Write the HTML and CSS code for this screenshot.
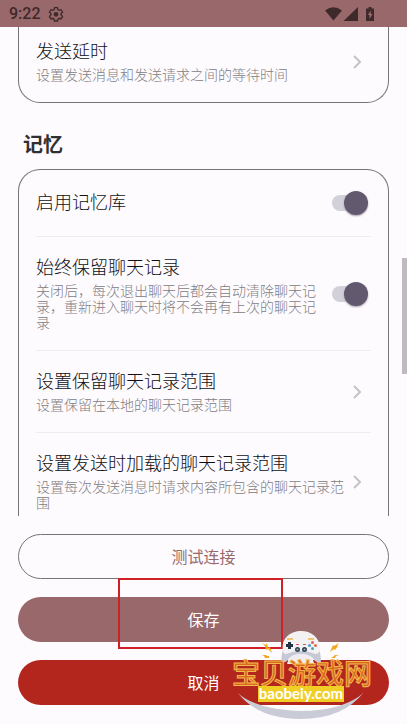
FILE: index.html
```html
<!DOCTYPE html>
<html lang="zh-CN">
<head>
<meta charset="utf-8">
<meta name="viewport" content="width=device-width, initial-scale=1">
<title>设置</title>
<link rel="stylesheet" href="styles.css">
</head>
<body>
<header class="status">
  <span class="clock">9:22</span>
  <svg class="gear" viewBox="0 0 24 24" aria-hidden="true"><path d="M9.8 2.500h4.400l.6 2.900 2 1.100 2.800-.9 2.200 3.800-2.200 2v2.200l2.200 2-2.200 3.800-2.800-.9-2 1.100-.6 2.900H9.800l-.6-2.900-2-1.100-2.800.9-2.200-3.800 2.200-2v-2.200l-2.200-2 2.200-3.800 2.800.9 2-1.100z"/><circle cx="12" cy="12.500" r="3.500"/></svg>
  <svg class="signals" viewBox="0 0 51 16" aria-hidden="true"><path d="M0 4.500Q8.500-2 17 4.500L8.500 14.500z"/><path d="M33 1v14H18.500z"/><path d="M43.500 1h3v1.500H49V15h-8V2.500h2.500z"/><path class="spark" d="M45.800 4.500 42.800 9h1.700v4l3-5h-1.700z"/></svg>
</header>

<main class="content">
  <section class="card card-first">
    <a class="row" href="#delay">
      <span class="text"><span class="title">发送延时</span><span class="desc">设置发送消息和发送请求之间的等待时间</span></span>
      <svg class="chevron" viewBox="0 0 8 14" aria-hidden="true"><path d="M1 1l6 6-6 6"/></svg>
    </a>
  </section>

  <h2 class="heading">记忆</h2>

  <section class="card card-last">
    <label class="row">
      <span class="text"><span class="title">启用记忆库</span></span>
      <input class="switch" type="checkbox" role="switch" checked>
    </label>
    <label class="row">
      <span class="text"><span class="title">始终保留聊天记录</span><span class="desc">关闭后，每次退出聊天后都会自动清除聊天记录，重新进入聊天时将不会再有上次的聊天记录</span></span>
      <input class="switch" type="checkbox" role="switch" checked>
    </label>
    <a class="row" href="#keep-range">
      <span class="text"><span class="title">设置保留聊天记录范围</span><span class="desc">设置保留在本地的聊天记录范围</span></span>
      <svg class="chevron" viewBox="0 0 8 14" aria-hidden="true"><path d="M1 1l6 6-6 6"/></svg>
    </a>
    <a class="row" href="#load-range">
      <span class="text"><span class="title">设置发送时加载的聊天记录范围</span><span class="desc">设置每次发送消息时请求内容所包含的聊天记录范围</span></span>
      <svg class="chevron" viewBox="0 0 8 14" aria-hidden="true"><path d="M1 1l6 6-6 6"/></svg>
    </a>
  </section>
</main>
<div class="scroll-thumb"></div>

<footer class="actions">
  <button class="btn btn-outline" type="button">测试连接</button>
  <button class="btn btn-primary" type="button">保存</button>
  <button class="btn btn-danger" type="button">取消</button>
  <div class="marker"></div>
  <svg class="brand" viewBox="232 628 142 94" role="img" aria-label="宝贝游戏网 baobeiy.com">
    <path fill="#c9cbd7" d="M238 693C258 714 336 720 364 692Q343 719 301 719Q258 719 238 693z"/>
    <path fill="#c7c9d6" d="M284 645Q281 655 281 664L287 661Q291 654 301 654Q311 654 315 661L321 664Q321 653 318 645z"/>
    <path fill="#f3f1f2" d="M283 650C281 638 291 631 301 631S319 637 320 647Q321 654 315 654Q309 651 301 651T286 654Q283 654 283 650z"/>
    <path fill="#efedf0" d="M287 664Q289 654 301 654T314 664z"/>
    <path fill="none" stroke="#edb44c" stroke-width="1.500" d="M287 639h6m15 0h6"/>
    <path fill="none" stroke="#203543" stroke-width="3" d="M289.500 642v7m-3.500-3.500h7"/>
    <circle cx="297.500" cy="649.500" r="2.500" fill="#2c4354"/><circle cx="304.500" cy="649.500" r="2.500" fill="#2c4354"/>
    <circle cx="297.500" cy="649.500" r="1" fill="#9aaab7"/><circle cx="304.500" cy="649.500" r="1" fill="#9aaab7"/>
    <path stroke="#e35471" stroke-width="1" d="M296 644.500h3m4 0h3"/>
    <circle cx="312.500" cy="642.500" r="1.500" fill="#e45862"/><circle cx="309.500" cy="645.500" r="1.500" fill="#41a6c5"/><circle cx="315.500" cy="645.500" r="1.500" fill="#e6674d"/><circle cx="312.500" cy="648.500" r="1.500" fill="#45a2b6"/>
    <path fill="#f3a51f" d="M262 643l4 2 1-2 1 5 2-1 2 6-4-4-2 1-1-4zM262 655l4 0 1 1 2 0 0 2-4 0-1-2zM339 643l-5 3-1-1-3 7-1 0 1 0 4-3 1 1 3-4-1 0zM339 655l-4 0-1 1-3 2 4 0 1-2z"/>
    <text class="brand-name" x="232" y="684">宝贝游戏网</text>
    <path fill="#f1ce26" d="M258 686h86v16h-86z"/>
    <text class="brand-url" x="301" y="699" text-anchor="middle">baobeiy.com</text>
  </svg>
</footer>
</body>
</html>
```
FILE: styles.css
```css
* { box-sizing: border-box; }

body {
  margin: 0;
  height: 100vh;
  display: flex;
  flex-direction: column;
  position: relative;
  overflow: hidden;
  background: #fefbff;
  color: #303033;
  font-family: Roboto, "Noto Sans CJK SC", sans-serif;
}

.status {
  flex: none;
  height: 27px;
  padding: 0 31px 0 9px;
  display: flex;
  align-items: center;
  gap: 7px;
  background: #99686a;
  color: #3e292b;
}
.clock { font-size: 16px; font-weight: 500; line-height: 27px; }
.gear { width: 16px; height: 16px; fill: none; stroke: #3e292b; stroke-width: 2; }
.gear circle { fill: #3e292b; stroke: none; }
.signals { width: 51px; height: 16px; margin-left: auto; fill: #3e292b; }
.signals .spark { fill: #99686a; }

.content {
  flex: 1;
  min-height: 0;
  overflow: hidden;
  padding: 0 18px;
}
.card {
  border: 1px solid #77737a;
  border-radius: 22px;
  padding: 0 17px;
}
.card-first { margin-top: -6px; border-top: 0; border-radius: 0 0 22px 22px; }
.card-last { border-bottom: 0; border-radius: 22px 22px 0 0; }
.heading {
  margin: 28px 5px 10px;
  font-size: 20px;
  line-height: 28px;
  font-weight: 700;
}
.row {
  display: flex;
  align-items: center;
  gap: 8px;
  padding: 19px 0;
  color: inherit;
  text-decoration: none;
}
.row + .row { border-top: 1px solid #f0ecf1; }
.text { flex: 1; display: flex; flex-direction: column; gap: 3px; }
.title { font-size: 18px; font-weight: 300; line-height: 24px; color: #101012; }
.desc { font-size: 14px; font-weight: 300; line-height: 16px; color: #808083; }
.chevron {
  flex: none;
  width: 8px;
  height: 14px;
  margin-right: 10px;
  fill: none;
  stroke: #c5c3c7;
  stroke-width: 2;
}
.switch {
  appearance: none;
  flex: none;
  width: 36px;
  height: 28px;
  margin: 0 3px 0 0;
  display: grid;
  align-items: center;
}
.switch::before,
.switch::after { content: ""; grid-area: 1 / 1; }
.switch::before { height: 16px; width: 32px; border-radius: 8px; background: #d2d0d8; }
.switch::after {
  justify-self: end;
  width: 24px;
  height: 24px;
  border-radius: 50%;
  background: #62596f;
  box-shadow: 0 1px 2px #a09ca6;
}

.scroll-thumb {
  position: absolute;
  right: 0;
  top: 258px;
  width: 5px;
  height: 116px;
  background: #bebac0;
}

.actions {
  flex: none;
  position: relative;
  display: flex;
  flex-direction: column;
  gap: 18px;
  padding: 18px 18px 19px;
}
.btn {
  height: 45px;
  padding: 2px 0 0;
  border: 0;
  border-radius: 23px;
  font: 16px/24px Roboto, "Noto Sans CJK SC", sans-serif;
  color: #fff;
}
.btn-outline { border: 1px solid #77737a; background: transparent; color: #99686a; }
.btn-primary { background: #99686a; }
.btn-danger { background: #b3261e; }
.marker {
  position: absolute;
  bottom: 75px;
  left: calc(50% - 86px);
  width: 165px;
  height: 71px;
  border: 2px solid #cf2028;
}
.brand {
  position: absolute;
  right: 33px;
  bottom: 2px;
  width: 142px;
  height: 94px;
}
.brand-name {
  font: 500 28px Roboto, "Noto Sans CJK SC", sans-serif;
  fill: #d9681f;
  stroke: #f4b84c;
  stroke-width: 1;
}
.brand-url { font: 700 15px Lato, sans-serif; fill: #fff; }
```
